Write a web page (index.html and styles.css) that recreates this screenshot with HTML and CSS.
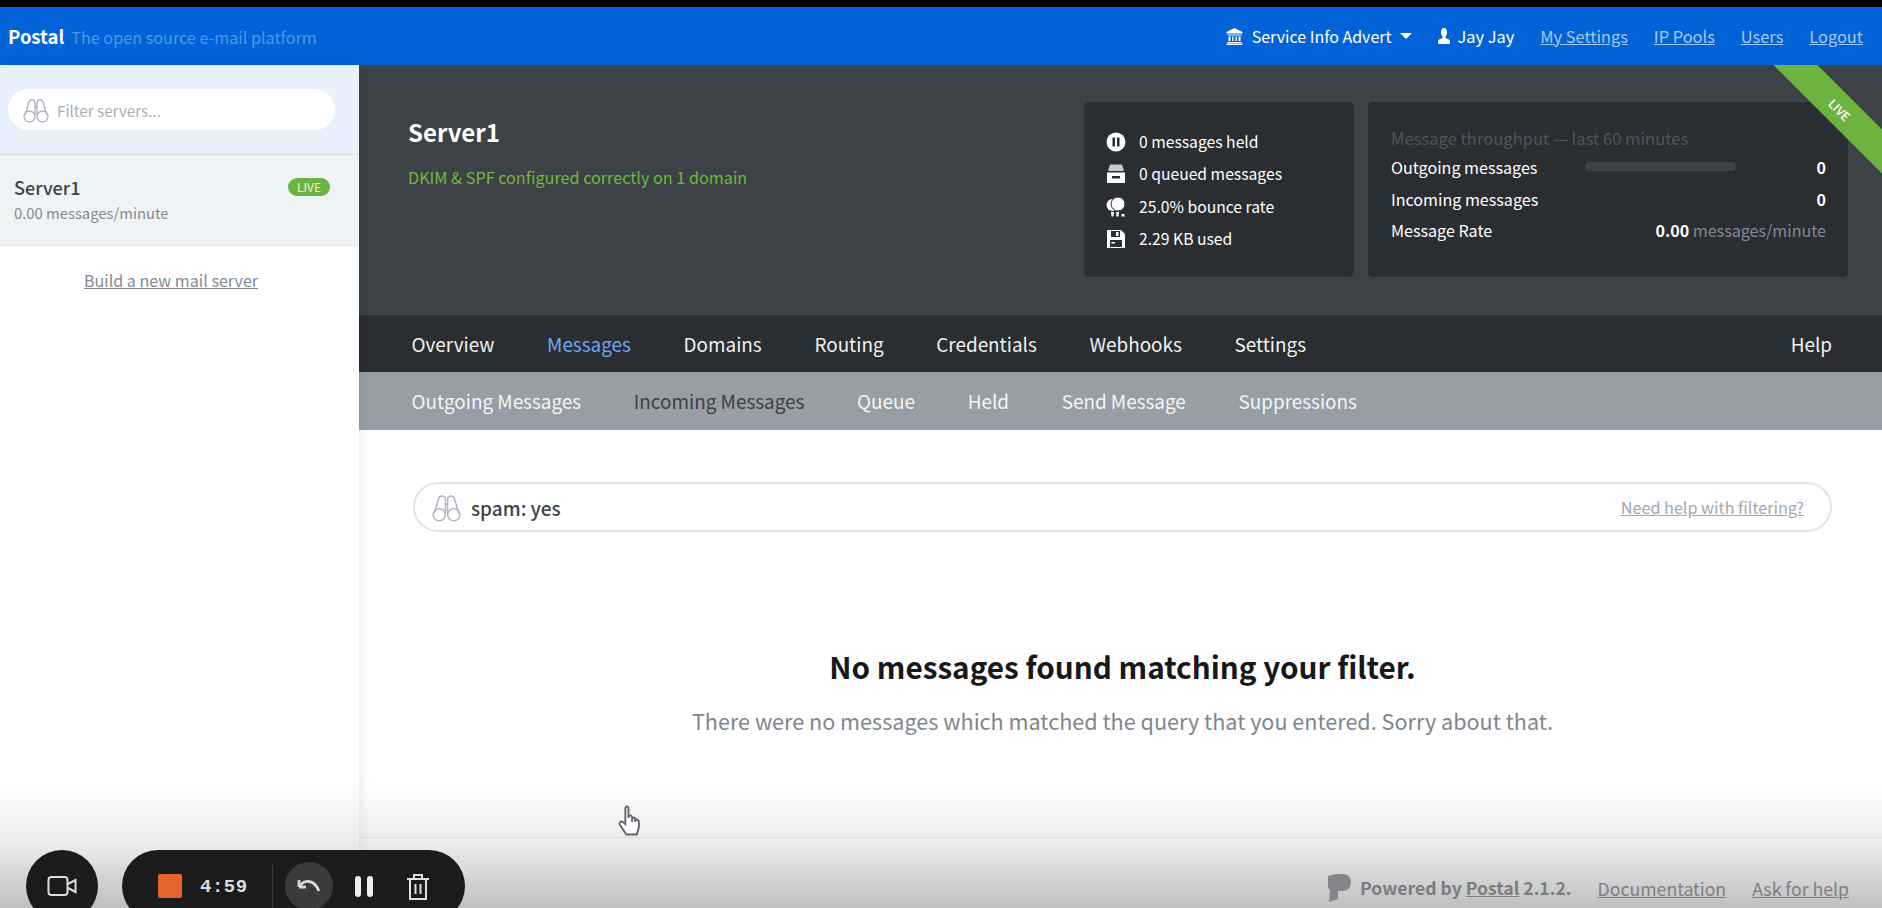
FILE: index.html
```html
<!DOCTYPE html>
<html lang="en">
<head>
    <meta charset="UTF-8">
    <title>Postal</title>
    <link rel="stylesheet" href="styles.css">
</head>
<body>
    <header class="topbar">
        <div class="brand"><strong>Postal</strong><span class="tagline">The open source e-mail platform</span></div>
        <nav class="user-nav">
            <span class="org">
                <svg class="top-icon" viewBox="0 0 18 18"><path d="M9 1 L17 5 V6.500 H1 V5 Z M2 7.500 H16 V8.500 H2 Z M3 9.500 H5 V14 H3 Z M6.500 9.500 H8 V14 H6.500 Z M10 9.500 H11.500 V14 H10 Z M13 9.500 H15 V14 H13 Z M2 15 H16 V16 H2 Z M1 16.500 H17 V18 H1 Z"/></svg>
                Service Info Advert <i class="caret"></i>
            </span>
            <span class="person">
                <svg class="top-icon small" viewBox="0 0 12 18"><path d="M6 1 C8 1 9 3 9 5 C9 7 8.500 8.500 7.500 9.500 V11 C9.500 12 12 12.500 12 14 V17 H0 V14 C0 12.500 2.500 12 4.500 11 V9.500 C3.500 8.500 3 7 3 5 C3 3 4 1 6 1 Z"/></svg>
                Jay Jay
            </span>
            <a href="#">My Settings</a>
            <a href="#">IP Pools</a>
            <a href="#">Users</a>
            <a href="#">Logout</a>
        </nav>
    </header>

    <div class="layout">
        <aside class="sidebar">
            <div class="filter-area">
                <div class="filter-pill">
                    <svg class="binoculars" viewBox="0 0 26 26"><path d="M2 18 L6 5 C7 2 11 2 12 5 V18 M24 18 L20 5 C19 2 15 2 14 5 V18 M12 10 H14"/><circle cx="6.500" cy="19.500" r="5.500"/><circle cx="19.500" cy="19.500" r="5.500"/></svg>
                    <span>Filter servers...</span>
                </div>
            </div>
            <div class="server-item">
                <div>
                    <div class="server-name">Server1</div>
                    <div class="server-rate">0.00 messages/minute</div>
                </div>
                <span class="live-badge">LIVE</span>
            </div>
            <a class="new-server" href="#">Build a new mail server</a>
        </aside>

        <main class="content">
            <section class="server-header">
                <div class="server-title">
                    <h1>Server1</h1>
                    <p>DKIM &amp; SPF configured correctly on 1 domain</p>
                </div>
                <div class="stat-card stats">
                    <div class="stat-row">
                        <svg viewBox="0 0 20 20"><circle cx="10" cy="10" r="9.500" fill="#fff"/><rect x="6.500" y="5.500" width="2.500" height="9" fill="#2a2d31"/><rect x="11" y="5.500" width="2.500" height="9" fill="#2a2d31"/></svg>
                        0 messages held
                    </div>
                    <div class="stat-row">
                        <svg viewBox="0 0 20 20"><path d="M4 0.500 H16 L18 7 H2 Z" fill="#c9cbcd"/><path d="M1 8.500 H19 V19 H1 Z M6 12 V14.500 H14 V12 Z" fill="#fff" fill-rule="evenodd"/></svg>
                        0 queued messages
                    </div>
                    <div class="stat-row">
                        <svg viewBox="0 0 20 20"><circle cx="6.500" cy="8" r="6" fill="#fff"/><circle cx="12" cy="7" r="7" fill="#fff" stroke="#2a2d31" stroke-width="1"/><path d="M5 15 H8 L7.500 19.500 H5.500 Z M10 15 H13 L12.500 19.500 H10.500 Z" fill="#fff"/><rect x="15.500" y="17" width="3" height="2.500" fill="#fff"/></svg>
                        25.0% bounce rate
                    </div>
                    <div class="stat-row">
                        <svg viewBox="0 0 20 20"><path d="M1 1 H15 L19 5 V19 H1 Z M5 2 V8 H14 V2 Z M4 11 V18 H16 V11 Z M10 3 H12.500 V7 H10 Z M5.500 13 H9 V14.500 H5.500 Z" fill="#fff" fill-rule="evenodd"/></svg>
                        2.29 KB used
                    </div>
                </div>
                <div class="stat-card throughput">
                    <div class="throughput-title">Message throughput &mdash; last 60 minutes</div>
                    <div class="throughput-row">
                        <span>Outgoing messages</span>
                        <span class="bar"></span>
                        <b>0</b>
                    </div>
                    <div class="throughput-row">
                        <span>Incoming messages</span>
                        <b>0</b>
                    </div>
                    <div class="throughput-row">
                        <span>Message Rate</span>
                        <span><b>0.00</b> <span class="unit">messages/minute</span></span>
                    </div>
                </div>
                <div class="live-ribbon">LIVE</div>
            </section>

            <nav class="main-nav">
                <a href="#">Overview</a>
                <a href="#" class="active">Messages</a>
                <a href="#">Domains</a>
                <a href="#">Routing</a>
                <a href="#">Credentials</a>
                <a href="#">Webhooks</a>
                <a href="#">Settings</a>
                <a href="#" class="help">Help</a>
            </nav>
            <nav class="sub-nav">
                <a href="#">Outgoing Messages</a>
                <a href="#" class="active">Incoming Messages</a>
                <a href="#">Queue</a>
                <a href="#">Held</a>
                <a href="#">Send Message</a>
                <a href="#">Suppressions</a>
            </nav>

            <div class="page">
                <div class="query-box">
                    <svg class="binoculars big" viewBox="0 0 26 26"><path d="M2 18 L6 5 C7 2 11 2 12 5 V18 M24 18 L20 5 C19 2 15 2 14 5 V18 M12 10 H14"/><circle cx="6.500" cy="19.500" r="5.500"/><circle cx="19.500" cy="19.500" r="5.500"/></svg>
                    <span class="query">spam: yes</span>
                    <a href="#">Need help with filtering?</a>
                </div>
                <div class="empty">
                    <h2>No messages found matching your filter.</h2>
                    <p>There were no messages which matched the query that you entered. Sorry about that.</p>
                </div>
            </div>

            <footer class="footer">
                <svg class="postal-logo" viewBox="0 0 24 28"><path d="M1 2 L9 0 H16 C21 0 24 4 24 8.500 C24 13 21 17 16 17 H11 V25 L2 28 L3 16 L1 14 Z"/></svg>
                <span class="powered">Powered by <a href="#">Postal</a> 2.1.2.</span>
                <a href="#">Documentation</a>
                <a href="#">Ask for help</a>
            </footer>
        </main>
    </div>

    <!-- video overlay over the page -->
    <div class="fade"></div>
    <svg class="hand" viewBox="0 0 24 30"><path d="M8 16 V3 C8 0.500 11 0.500 11 3 V12 L11.500 10 C13 9 14.500 10 14.500 12 C16 11 17.500 12 17.500 13.500 C19 13 21 14 21 16 V21 L19 28 H9 L3 19 C1.500 16.500 3.500 14.500 5.500 16 L8 18 Z M14.500 12 V16 M17.500 13.500 V16"/></svg>
    <div class="rec-camera">
        <svg viewBox="0 0 30 22"><rect x="1.500" y="2" width="19" height="18" rx="3"/><path d="M21 9 L28.500 5 V17 L21 13"/></svg>
    </div>
    <div class="rec-bar">
        <span class="rec-stop"></span>
        <span class="rec-time">4:59</span>
        <span class="rec-divider"></span>
        <span class="rec-undo">
            <svg viewBox="0 0 26 20"><path d="M3 11 H10 M3 11 V4 M3 11 C8 3 18 3 23 15"/></svg>
        </span>
        <span class="rec-pause"><i></i><i></i></span>
        <svg class="rec-trash" viewBox="0 0 24 28"><path d="M1 6 H23 M8 6 V2 H16 V6 M4 6 V26 H20 V6 M9.500 11 V21 M14.500 11 V21"/></svg>
    </div>
</body>
</html>
```

FILE: styles.css
```css
* {
    box-sizing: border-box;
}
html, body {
    height: 100%;
}
body {
    margin: 0;
    display: flex;
    flex-direction: column;
    height: 100vh;
    overflow: hidden;
    font-family: "Noto Sans CJK SC", "Open Sans", sans-serif;
    color: #2a2d31;
    background: #fff;
    position: relative;
}
a {
    color: inherit;
}

/* top bar */
.topbar {
    height: 65px;
    flex: none;
    border-top: 7px solid #000;
    background: #0263d8;
    color: #fff;
    display: flex;
    align-items: center;
    justify-content: space-between;
    padding: 0 19px 0 8px;
    font-size: 16.400px;
    line-height: 22px;
}
.brand strong {
    font-weight: 700;
    font-size: 18.500px;
}
.tagline {
    margin-left: 7px;
    font-size: 16.200px;
    color: #4d97ec;
}
.user-nav {
    display: flex;
    align-items: center;
    gap: 26px;
}
.user-nav a {
    color: #a5c9f4;
}
.org, .person {
    display: flex;
    align-items: center;
    gap: 8px;
}
.org {
    font-size: 16px;
}
.top-icon {
    width: 19px;
    height: 18px;
    fill: #fff;
}
.top-icon.small {
    width: 12px;
    height: 18px;
}
.caret {
    width: 0;
    height: 0;
    border-left: 6px solid transparent;
    border-right: 6px solid transparent;
    border-top: 6px solid #fff;
}

.layout {
    flex: 1;
    display: flex;
    min-height: 0;
}

/* sidebar */
.sidebar {
    width: 359px;
    flex: none;
    background: #fff;
    position: relative;
    z-index: 1;
    box-shadow: 2px 0 10px rgba(0, 0, 0, 0.08);
    text-align: center;
    padding-right: 17px;
}
.filter-area {
    height: 90px;
    margin-right: -17px;
    padding: 24px 24px 0 8px;
    background: #e6f1fb;
    border-bottom: 1px solid #d3dee8;
}
.filter-pill {
    height: 41px;
    border-radius: 21px;
    background: #fff;
    display: flex;
    align-items: center;
    gap: 8px;
    padding-left: 15px;
    font-size: 15.200px;
    color: #a9aeb8;
}
.binoculars {
    width: 26px;
    height: 26px;
    fill: none;
    stroke: #aeb3c0;
    stroke-width: 1.300;
}
.server-item {
    height: 91px;
    margin-right: -17px;
    padding: 20px 29px 0 14px;
    background: #eff3f6;
    border-bottom: 1px solid #e4e8eb;
    display: flex;
    justify-content: space-between;
    align-items: flex-start;
    text-align: left;
}
.server-name {
    font-size: 18px;
    line-height: 24px;
    font-weight: 500;
    color: #3c4146;
}
.server-rate {
    margin-top: 4px;
    font-size: 14.800px;
    line-height: 20px;
    color: #838b92;
}
.live-badge {
    margin-top: 3px;
    width: 42px;
    height: 18px;
    border-radius: 9px;
    background: #6db33f;
    color: #e8f5da;
    font-size: 12px;
    line-height: 18px;
    text-align: center;
}
.new-server {
    display: inline-block;
    margin-top: 22px;
    font-size: 16.100px;
    line-height: 24px;
    color: #868b90;
}

/* server header */
.content {
    flex: 1;
    min-width: 0;
    display: flex;
    flex-direction: column;
}
.server-header {
    height: 250px;
    flex: none;
    background: #3c4246;
    position: relative;
    overflow: hidden;
    display: flex;
    align-items: flex-start;
    padding: 37px 34px 0 49px;
}
.server-title {
    flex: 1;
    margin-top: 13px;
}
.server-title h1 {
    margin: 0;
    font-size: 24px;
    line-height: 34px;
    font-weight: 700;
    color: #fff;
}
.server-title p {
    margin: 16px 0 0;
    font-size: 16.200px;
    line-height: 24px;
    color: #72b83e;
}
.stat-card {
    height: 175px;
    background: #2a2d31;
    border-radius: 5px;
    color: #fff;
    font-size: 16.100px;
    line-height: 24px;
}
.stats {
    width: 270px;
    margin-right: 14px;
    padding: 28px 0 0 22px;
    font-size: 15.700px;
}
.stat-row {
    height: 32.300px;
    display: flex;
    align-items: flex-start;
    gap: 13px;
}
.stat-row svg {
    width: 20px;
    height: 20px;
    flex: none;
    margin-top: 2px;
}
.throughput {
    width: 480px;
    padding: 24px 22px 0 23px;
}
.throughput-title {
    color: #4d565e;
    height: 29px;
    font-size: 16.600px;
}
.throughput-row {
    height: 31.500px;
    display: flex;
    justify-content: space-between;
    align-items: flex-start;
    position: relative;
}
.throughput-row b {
    font-weight: 700;
}
.bar {
    position: absolute;
    left: 194px;
    top: 7px;
    width: 151px;
    height: 9px;
    border-radius: 4px;
    background: #3c4246;
}
.unit {
    color: #7f8a94;
}
.live-ribbon {
    position: absolute;
    top: 29px;
    right: -58px;
    width: 200px;
    height: 31px;
    transform: rotate(45deg);
    background: #6db33f;
    color: #fff;
    font-size: 12px;
    font-weight: 500;
    line-height: 31px;
    text-align: center;
}

/* nav bars */
.main-nav, .sub-nav {
    height: 57px;
    flex: none;
    display: flex;
    align-items: center;
    gap: 52.700px;
    padding: 0 50px 0 52.500px;
    font-size: 18.900px;
    line-height: 26px;
}
.main-nav {
    background: #2a2d31;
    color: #f0f1f1;
}
.main-nav a, .sub-nav a {
    text-decoration: none;
}
.main-nav .active {
    color: #6ea8f0;
}
.help {
    margin-left: auto;
}
.sub-nav {
    height: 58px;
    background: #969fa6;
    color: #f4f5f5;
}
.sub-nav .active {
    color: #3a4147;
}

/* page body */
.page {
    flex: 1;
    min-height: 0;
    background: #fff;
    padding: 52px 50px 0 54px;
}
.query-box {
    height: 50px;
    border: 2px solid #dfe6ef;
    border-radius: 25px;
    background: #fff;
    display: flex;
    align-items: center;
    padding: 0 26px 0 17px;
    font-size: 16.200px;
    color: #a0a8b4;
}
.binoculars.big {
    width: 29px;
    height: 29px;
}
.query {
    flex: 1;
    margin-left: 10px;
    font-size: 19px;
    font-weight: 500;
    color: #3d4349;
}
.empty {
    text-align: center;
    margin-top: 115px;
}
.empty h2 {
    margin: 0;
    font-size: 29.700px;
    line-height: 40px;
    font-weight: 700;
    color: #16181a;
}
.empty p {
    margin: 19px 0 0;
    font-size: 21.600px;
    line-height: 30px;
    color: #7f868c;
}

/* footer */
.footer {
    height: 71px;
    flex: none;
    border-top: 1px solid #e8e8e8;
    display: flex;
    align-items: flex-start;
    justify-content: flex-end;
    gap: 26px;
    padding: 38px 33px 0 0;
    font-size: 17.700px;
    line-height: 24px;
    color: #6f7478;
}
.postal-logo {
    width: 24px;
    height: 28px;
    fill: #7d8084;
    margin-right: -17px;
    margin-top: -2px;
}
.powered {
    font-size: 17.600px;
    font-weight: 700;
    color: #6b6f73;
}

/* video overlay */
.fade {
    position: absolute;
    left: 0;
    right: 0;
    bottom: 0;
    height: 130px;
    z-index: 2;
    background: linear-gradient(to bottom, rgba(150, 150, 150, 0), rgba(150, 150, 150, 0.18) 50%, rgba(140, 140, 140, 0.55));
    pointer-events: none;
}
.hand {
    position: absolute;
    left: 617px;
    top: 805px;
    width: 25px;
    height: 32px;
    z-index: 3;
    fill: #fff;
    stroke: #5f646c;
    stroke-width: 1.800;
}
.rec-camera, .rec-bar {
    position: absolute;
    top: 850px;
    height: 72px;
    z-index: 3;
    background: #1b1b1c;
    border-radius: 36px;
}
.rec-camera {
    left: 26px;
    width: 72px;
    display: flex;
    justify-content: center;
    padding-top: 25px;
}
.rec-camera svg {
    width: 30px;
    height: 22px;
    fill: none;
    stroke: #dcdcdc;
    stroke-width: 2;
}
.rec-bar {
    left: 122px;
    width: 343px;
    display: flex;
    align-items: flex-start;
    padding-left: 36px;
}
.rec-stop {
    width: 24px;
    height: 24px;
    margin-top: 24px;
    border-radius: 2px;
    background: #e2652c;
}
.rec-time {
    margin: 25px 0 0 18px;
    width: 72px;
    font-family: "Liberation Mono", monospace;
    font-size: 19px;
    line-height: 24px;
    font-weight: 700;
    letter-spacing: 0.500px;
    color: #d8dde2;
}
.rec-divider {
    width: 1px;
    height: 44px;
    margin-top: 15px;
    background: #3a3a3b;
}
.rec-undo {
    width: 48px;
    height: 48px;
    margin: 12px 0 0 12px;
    border-radius: 50%;
    background: #3b3b3c;
    display: flex;
    align-items: center;
    justify-content: center;
}
.rec-undo svg {
    width: 26px;
    height: 20px;
    fill: none;
    stroke: #d8d8d8;
    stroke-width: 2.800;
}
.rec-pause {
    display: flex;
    gap: 6px;
    margin: 26px 0 0 22px;
}
.rec-pause i {
    width: 6px;
    height: 21px;
    border-radius: 3px;
    background: #eee;
}
.rec-trash {
    width: 24px;
    height: 28px;
    margin: 23px 0 0 33px;
    fill: none;
    stroke: #e0e0e0;
    stroke-width: 2;
}
```
